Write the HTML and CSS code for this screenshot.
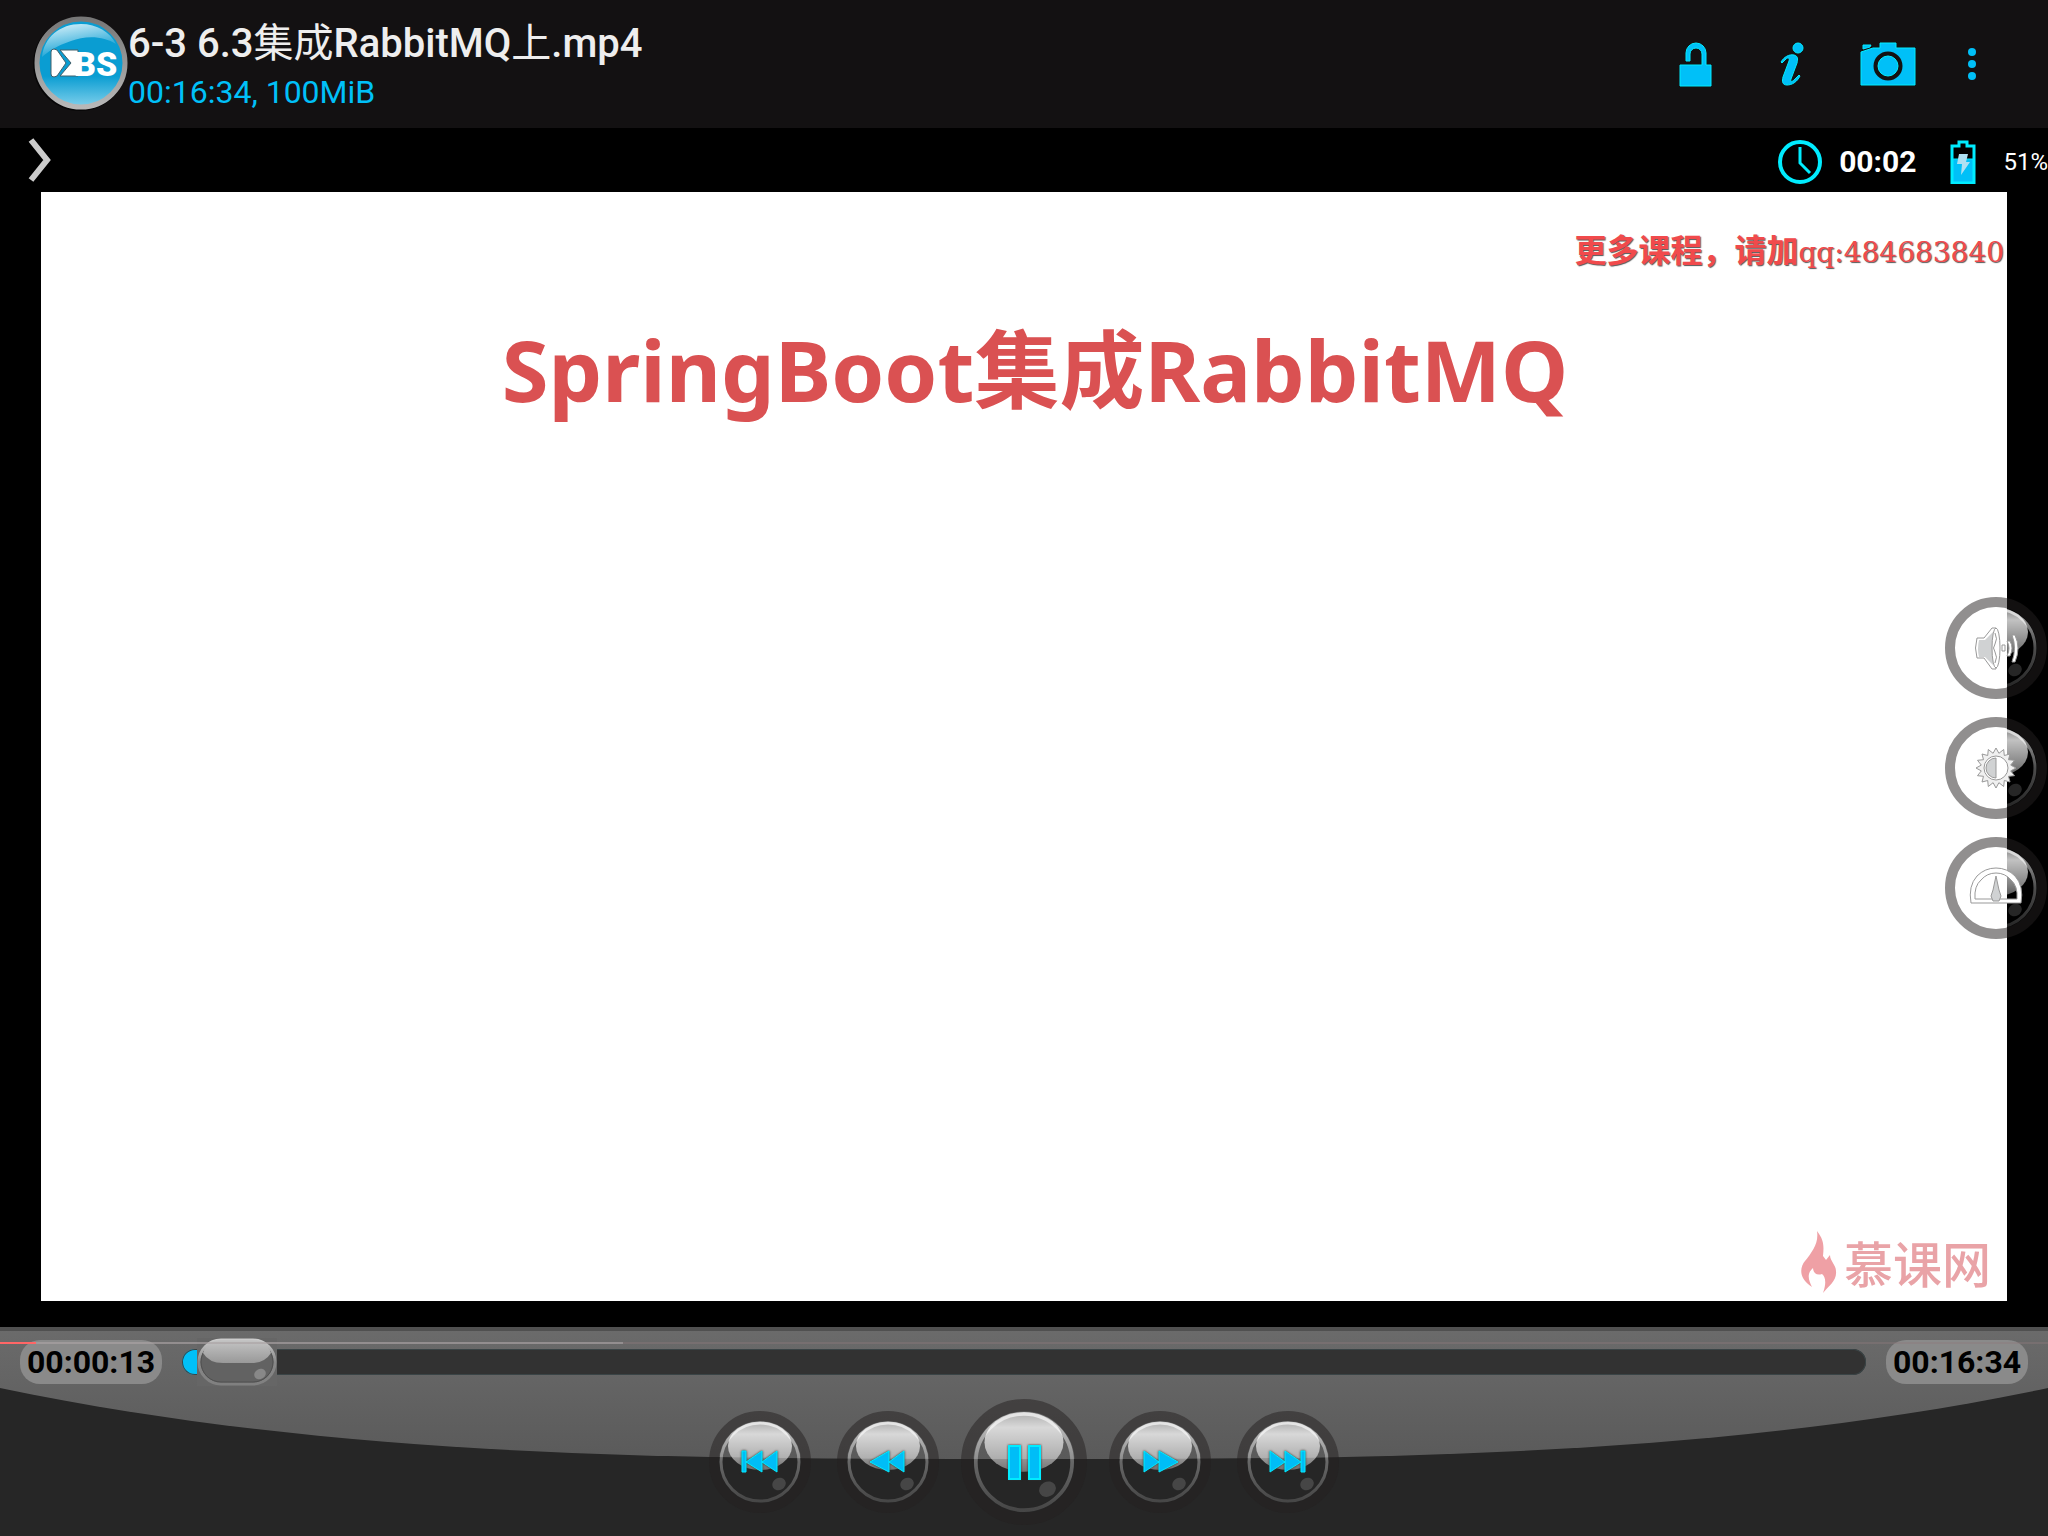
FILE: index.html
```html
<!DOCTYPE html>
<html lang="zh-CN">
<head>
<meta charset="utf-8">
<meta name="viewport" content="width=device-width, initial-scale=1">
<title>6-3 6.3集成RabbitMQ上.mp4</title>
<link rel="stylesheet" href="styles.css">
</head>
<body>
<svg class="defs" aria-hidden="true">
  <defs>
    <linearGradient id="gloss" x1="0" y1="0" x2="0" y2="1">
      <stop offset="0" stop-color="#fff" stop-opacity=".5"/>
      <stop offset=".25" stop-color="#fff" stop-opacity=".76"/>
      <stop offset=".75" stop-color="#fff" stop-opacity=".52"/>
      <stop offset="1" stop-color="#fff" stop-opacity=".35"/>
    </linearGradient>
    <linearGradient id="rim" x1="0" y1="0" x2="0" y2="1">
      <stop offset="0" stop-color="#fff" stop-opacity=".65"/>
      <stop offset=".5" stop-color="#fff" stop-opacity=".3"/>
      <stop offset="1" stop-color="#fff" stop-opacity=".15"/>
    </linearGradient>
    <linearGradient id="metal" x1="0" y1="0" x2="0" y2="1">
      <stop offset="0" stop-color="#777"/><stop offset="1" stop-color="#b8b8b8"/>
    </linearGradient>
    <linearGradient id="blue" x1="0" y1="0" x2="0" y2="1">
      <stop offset="0" stop-color="#0a9dd2"/><stop offset=".65" stop-color="#0a9dd2"/><stop offset="1" stop-color="#7fd0ec"/>
    </linearGradient>
    <linearGradient id="shine" x1="0" y1="0" x2=".4" y2="1">
      <stop offset="0" stop-color="#e4f6fc"/><stop offset="1" stop-color="#0a9dd2"/>
    </linearGradient>
    <linearGradient id="shell" x1="0" y1="0" x2="0" y2="1">
      <stop offset="0" stop-color="#6b6b6b"/><stop offset="1" stop-color="#5a5a5a"/>
    </linearGradient>
    <g id="glass">
      <circle cx="51" cy="51" r="46" fill="none" stroke="#231f20" stroke-opacity=".5" stroke-width="10"/>
      <circle cx="51" cy="51" r="39" fill="none" stroke="url(#rim)" stroke-width="3"/>
      <ellipse cx="51" cy="35" rx="32" ry="24" fill="url(#gloss)"/>
      <ellipse cx="70" cy="73" rx="7" ry="6" fill="#fff" fill-opacity=".15" transform="rotate(-30 70 73)"/>
    </g>
  </defs>
</svg>

<header class="topbar">
  <svg class="logo" viewBox="0 0 96 96" role="img" aria-label="BS Player">
    <circle cx="48" cy="48" r="47" fill="#000" fill-opacity=".6"/>
    <circle cx="49" cy="47" r="44" fill="url(#blue)" stroke="url(#metal)" stroke-width="5"/>
    <path d="M10 41C12 21 28 8 49 8c16 0 29 8 35 20-12-8-30-9-45-3-15 5-22 10-29 16z" fill="url(#shine)"/>
    <g fill="#fff">
      <path d="M19 36q0-3 3-3l3 1 9 13-9 13-3 1q-3 0-3-3z" stroke="#40606c"/>
      <path d="M28 34h18v26H28l11-13z" stroke="#40606c"/>
      <text x="42" y="60" class="logo-text">BS</text>
    </g>
  </svg>
  <div class="heading">
    <h1 class="file-name">6-3 6.3<span class="cjk">集成</span>RabbitMQ<span class="cjk">上</span>.mp4</h1>
    <p class="file-info">00:16:34, 100MiB</p>
  </div>
  <nav class="actions" aria-label="Player actions">
    <button class="action" aria-label="Lock"><svg width="36" height="48" viewBox="0 0 36 48"><path d="M2 25h22V14a6 6 0 0 0-12 0v7H8v-8a10 10 0 0 1 20 0v12h5v21H2z" fill="#00c0f8" stroke="#00ecff" stroke-width="1"/></svg></button>
    <button class="action" aria-label="Info"><svg width="36" height="48" viewBox="0 0 36 48"><g fill="#00c0f8" stroke="#00ecff" stroke-width="1"><circle cx="24" cy="8" r="5"/><path d="M7 22c3-5 8-8 13-7 4 1 4 4 3 8l-6 16c-1 3 1 3 3 1l5-5 1 1c-3 6-8 9-13 9-5 0-5-4-4-8l6-16c1-3-1-4-3-2l-4 4z"/></g></svg></button>
    <button class="action" aria-label="Screenshot"><svg width="58" height="48" viewBox="0 0 58 48"><g fill="#00c0f8" stroke="#00ecff" stroke-width="1"><path d="M2 12l12-4h7V3h16v5h19v37H2z"/><path d="M4 5h8l-1 2-7 2z"/></g><circle cx="29" cy="26" r="12" fill="none" stroke="#131112" stroke-width="5"/><circle cx="29" cy="26" r="10" fill="#00c0f8" stroke="#00ecff"/></svg></button>
    <button class="action action-more" aria-label="More"><svg width="12" height="48" viewBox="0 0 12 48"><g fill="#00c0f8"><circle cx="6" cy="12" r="4"/><circle cx="6" cy="24" r="4"/><circle cx="6" cy="36" r="4"/></g></svg></button>
  </nav>
</header>

<main class="stage">
  <div class="status">
    <button class="expand" aria-label="Expand"><svg width="24" height="44" viewBox="0 0 24 44"><path d="M3 2l16 20L3 42" fill="none" stroke="#ccc" stroke-width="6"/></svg></button>
    <svg class="clock" width="44" height="44" viewBox="0 0 44 44" aria-hidden="true"><circle cx="22" cy="22" r="20" fill="none" stroke="#00ecff" stroke-width="4"/><path d="M22 7v16l10 10" fill="none" stroke="#00ecff" stroke-width="3"/></svg>
    <time class="time">00:02</time>
    <svg class="battery" width="26" height="44" viewBox="0 0 26 44" aria-hidden="true"><path d="M1 19h24v24H1z" fill="#00c0f8"/><path d="M2 43V6h7V2h8v4h7v37z" fill="none" stroke="#00ecff" stroke-width="3"/><path d="M2 19h22" stroke="#00ecff"/><path d="M9 14h9l-2 8h4l-9 13 1-11H7z" fill="#aee0f2"/></svg>
    <span class="charge">51%</span>
  </div>
  <section class="slide">
    <p class="contact">更多课程，请加<span class="contact-id">qq:484683840</span></p>
    <h2 class="slide-title">SpringBoot集成RabbitMQ</h2>
    <div class="brand">
      <svg width="36" height="62" viewBox="0 0 36 62" aria-hidden="true"><path d="M16 0c7 9 7 15 6 25l3 4 4-5c0 6 6 10 6 16 1 10-7 14-13 22 4-11 2-17-1-19-6 2-9-2-9-6-7 6-4 13-1 19C-3 47-1 36 4 30 11 21 18 12 16 0z" fill="#efa0a5"/></svg>
      <span>慕课网</span>
    </div>
  </section>
  <div class="side">
    <button class="glass" aria-label="Volume"><svg width="102" height="102" viewBox="0 0 102 102"><use href="#glass"/><g fill="#fff" stroke="#999" stroke-width="1"><path d="M32 41h7l8-10h4v41h-4L39 61h-7q-3-10 0-20z"/><path d="M34 43h6l8-8v33l-8-8h-6q-2-8 0-17z" fill="#d0d2d3" stroke="none"/><ellipse cx="51" cy="51" rx="4" ry="20"/><path d="M50 36q3 6 0 11-3 4 0 8 3 5 0 11"/><path d="M57 48h3v6h-3zM62 44q4 7 0 15h3q4-8 0-15zM67 38q5 13 0 27h3q6-14 0-27z"/></g></svg></button>
    <button class="glass" aria-label="Brightness"><svg width="102" height="102" viewBox="0 0 102 102"><use href="#glass"/><path d="M71 51L65.700 53.900 69.500 58.700 63.500 59.300 65 65 59.300 63.500 58.700 69.500 53.900 65.700 51 71 48.100 65.700 43.300 69.500 42.700 63.500 37 65 38.500 59.300 32.500 58.700 36.300 53.900 31 51 36.300 48.100 32.500 43.300 38.500 42.700 37 37 42.700 38.500 43.300 32.500 48.100 36.300 51 31 53.900 36.300 58.700 32.500 59.300 38.500 65 37 63.500 42.700 69.500 43.300 65.700 48.100z" fill="#f0f0f0" stroke="#999"/><circle cx="51" cy="51" r="12" fill="#fff" stroke="#999"/><path d="M51 41a10 10 0 0 0 0 20z" fill="#d0d2d3" stroke="#999"/></svg></button>
    <button class="glass" aria-label="Speed"><svg width="102" height="102" viewBox="0 0 102 102"><use href="#glass"/><g stroke="#999" stroke-width="1"><path fill-rule="evenodd" d="M26 66Q23 49 32 39q8-8 19-8t19 8q9 10 6 27zM30 62h42q1-13-6-19-6-7-15-7t-15 7q-7 6-6 19z" fill="#fff"/><path d="M51 39l3 14 2 6-2 5h-6l-2-5 2-6z" fill="#d0d2d3"/></g></svg></button>
  </div>
</main>

<footer class="panel">
  <svg class="panel-shell" viewBox="0 0 2048 209" preserveAspectRatio="none" aria-hidden="true"><path d="M0 0H2048V61C1707 132 1365 132 1024 132S341 132 0 61z" fill="url(#shell)"/><path d="M0 2H2048" stroke="#505050" stroke-width="4"/></svg>
  <div class="seek-row">
    <span class="pill">00:00:13</span>
    <div class="track"><input class="seek" type="range" min="0" max="994" value="13" aria-label="Position"></div>
    <span class="pill">00:16:34</span>
  </div>
  <div class="buffer" aria-hidden="true"><span class="buffer-loaded"></span><span class="buffer-played"></span></div>
  <div class="controls">
    <button class="glass" aria-label="Previous"><svg width="102" height="102" viewBox="0 0 102 102"><use href="#glass"/><path class="glyph" d="M33 40h4v21h-4zM53 40v21L37 51zM68 40v21L53 51z"/></svg></button>
    <button class="glass" aria-label="Rewind"><svg width="102" height="102" viewBox="0 0 102 102"><use href="#glass"/><path class="glyph" d="M52 40v21L33 51zM67 40v21L52 51z"/></svg></button>
    <button class="glass glass-large" aria-label="Pause"><svg width="126" height="126" viewBox="0 0 126 126"><use href="#glass" transform="scale(1.235)"/><path class="glyph" stroke-width="2" d="M48 47h11v33H48zM68 47h11v33H68z"/></svg></button>
    <button class="glass" aria-label="Fast forward"><svg width="102" height="102" viewBox="0 0 102 102"><use href="#glass"/><path class="glyph" d="M35 40v21l15-10zM50 40v21l19-10z"/></svg></button>
    <button class="glass" aria-label="Next"><svg width="102" height="102" viewBox="0 0 102 102"><use href="#glass"/><path class="glyph" d="M33 40v21l15-10zM48 40v21l16-10zM64 40h4v21h-4z"/></svg></button>
  </div>
</footer>
</body>
</html>
```
FILE: styles.css
```css
* { box-sizing: border-box; }

body {
  margin: 0;
  min-height: 100vh;
  display: flex;
  flex-direction: column;
  background: #000;
  color: #fff;
  font-family: Roboto, "Noto Sans CJK SC", sans-serif;
}

h1, h2, p { margin: 0; }

button {
  padding: 0;
  border: 0;
  background: none;
  cursor: pointer;
}

svg { display: block; }

.defs { position: absolute; width: 0; height: 0; }

/* Top bar */
.topbar {
  display: flex;
  align-items: center;
  height: 128px;
  padding: 0 40px 0 32px;
  background: #131112;
}

.logo { width: 96px; height: 96px; }
.logo-text { font: 900 34px Roboto, sans-serif; }

.heading {
  flex: 1;
  display: flex;
  flex-direction: column;
  gap: 4px;
  padding-top: 4px;
}

.file-name {
  color: #eee;
  font-size: 40px;
  font-weight: 500;
  line-height: 48px;
}
.cjk { font-weight: 400; }

.file-info {
  color: #00c0f8;
  font-size: 32px;
  line-height: 40px;
}

.actions { display: flex; }
.action {
  display: flex;
  justify-content: center;
  width: 96px;
}
.action-more { width: 72px; }

/* Video area */
.stage {
  position: relative;
  flex: 1;
  display: flex;
  flex-direction: column;
  padding-bottom: 26px;
}

.status {
  display: flex;
  align-items: center;
  height: 64px;
  padding-top: 4px;
}
.expand { margin: 0 auto 4px 28px; }
.time {
  margin: 0 34px 2px 17px;
  font-size: 30px;
  font-weight: 700;
}
.charge { margin-left: 27px; font-size: 24px; }

.slide {
  flex: 1;
  display: flex;
  flex-direction: column;
  margin: 0 2%;
  padding: 36px 0 8px;
  background: #fff;
}

.contact {
  align-self: flex-end;
  padding-right: 3px;
  color: #f14a4c;
  font: 700 32px/40px "Noto Sans CJK SC", sans-serif;
  text-shadow: 1px 1px 1px #555;
}
.contact-id { font: 400 28px/40px "DejaVu Serif", serif; }

.slide-title {
  margin-top: 44px;
  padding-left: 22px;
  color: #da5152;
  font: 700 85px/104px "Noto Sans", "Noto Sans CJK SC", sans-serif;
  text-align: center;
}

.brand {
  display: flex;
  align-items: center;
  align-self: flex-end;
  gap: 7px;
  margin-top: auto;
  padding-right: 16px;
  color: #e9a3a7;
  font: 500 49px/60px "Noto Sans CJK SC", sans-serif;
}

.side {
  position: absolute;
  top: 469px;
  right: 1px;
  display: flex;
  flex-direction: column;
  gap: 18px;
}

/* Bottom panel */
.panel {
  position: relative;
  padding: 11px 20px;
  background: #262626;
}

.panel-shell {
  position: absolute;
  inset: 0;
  width: 100%;
  height: 100%;
}

.buffer {
  position: absolute;
  top: 15px;
  left: 0;
  width: 100%;
  height: 2px;
  background: rgba(140, 120, 122, .4);
}
.buffer-loaded, .buffer-played {
  position: absolute;
  left: 0;
  height: 2px;
}
.buffer-loaded { width: 30.4%; background: rgba(190, 190, 190, .4); }
.buffer-played { width: 36px; background: #f66; }

.seek-row {
  position: relative;
  display: flex;
  align-items: center;
  gap: 20px;
  height: 48px;
}

.pill {
  width: 142px;
  border-radius: 20px;
  background: #8a8a8a;
  color: #000;
  font-size: 32px;
  font-weight: 700;
  line-height: 44px;
  text-align: center;
}

.track {
  flex: 1;
  display: flex;
  align-items: center;
  height: 26px;
  border-radius: 13px;
  background: linear-gradient(90deg, #00c0f8 40px, #323232 40px);
  box-shadow: inset 0 0 0 1px #3a4446;
}

.seek {
  flex: 1;
  height: 48px;
  margin: 0 -6px;
  background: none;
  appearance: none;
}

.seek::-webkit-slider-thumb {
  appearance: none;
  width: 80px;
  height: 48px;
  background: url("data:image/svg+xml,%3Csvg xmlns='http://www.w3.org/2000/svg' viewBox='0 0 80 48'%3E%3Cdefs%3E%3ClinearGradient id='r' x2='0' y2='1'%3E%3Cstop stop-color='%23ccc'/%3E%3Cstop offset='.5' stop-color='%23888'/%3E%3Cstop offset='1' stop-color='%23808080'/%3E%3C/linearGradient%3E%3ClinearGradient id='g' x2='0' y2='1'%3E%3Cstop stop-color='%23c4c4c4'/%3E%3Cstop offset='1' stop-color='%23999'/%3E%3C/linearGradient%3E%3C/defs%3E%3Crect width='80' height='48' fill='%23666'/%3E%3Crect x='2' y='2' width='76' height='44' rx='22' fill='%23626262' stroke='url(%23r)' stroke-width='3'/%3E%3Crect x='4' y='4' width='72' height='40' rx='20' fill='none' stroke='%23505050'/%3E%3Cpath d='M6 15Q10 2 24 2h32q14 0 18 13-6 10-20 10H26Q12 25 6 15z' fill='url(%23g)'/%3E%3Cellipse cx='63' cy='36' rx='6' ry='5' fill='%23888' transform='rotate(-30 63 36)'/%3E%3C/svg%3E");
}

.controls {
  position: relative;
  display: flex;
  justify-content: center;
  align-items: center;
  gap: 26px;
  margin-top: 13px;
}
.glass-large { margin: 0 -4px; }
.glyph {
  fill: #00bdf7;
  stroke: #00ecff;
  filter: drop-shadow(0 0 1px #333);
}
```
